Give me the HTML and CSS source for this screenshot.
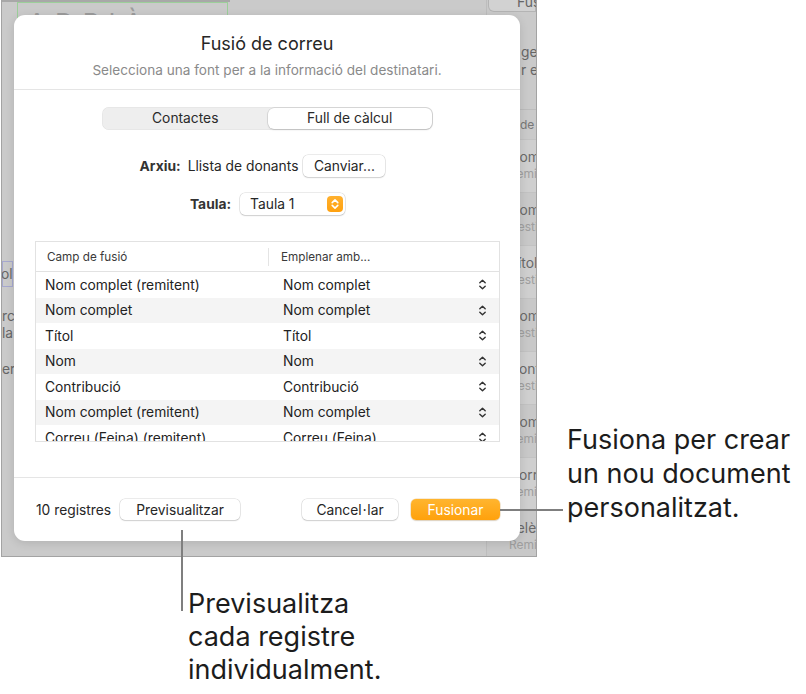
FILE: index.html
```html
<!DOCTYPE html>
<html lang="ca">
<head>
	<meta charset="UTF-8">
	<meta name="viewport" content="width=device-width, initial-scale=1.0">
	<title>Fusió de correu</title>
	<link rel="stylesheet" href="styles.css">
</head>
<body>
<div class="figure">
	<div class="shot">
		<div class="app">
			<div class="strip">
				<div class="cells"><span>ol</span><span></span></div>
				<p class="frag frag-rc">rc</p>
				<p class="frag">la</p>
				<p class="frag frag-er">er</p>
			</div>
			<div class="doc">
				<div class="doc-bar"></div>
				<div class="name-box">ADRIÀ BOVIRA</div>
			</div>
			<div class="sidebar">
				<div class="side-btn">Fusionar</div>
				<p class="side-text">gegant<br>r exemple</p>
				<div class="side-head">de fusió</div>
				<div class="side-item"><b>Nom complet</b><small>Remitent</small></div>
				<div class="side-item alt"><b>Nom complet</b><small>Destinatari</small></div>
				<div class="side-item"><b>Títol</b><small>Destinatari</small></div>
				<div class="side-item alt"><b>Nom</b><small>Destinatari</small></div>
				<div class="side-item"><b>Contribució</b><small>Destinatari</small></div>
				<div class="side-item alt"><b>Nom complet</b><small>Remitent</small></div>
				<div class="side-item"><b>Correu</b><small>Remitent</small></div>
				<div class="side-item alt"><b>Telèfon</b><small>Remitent</small><i class="dot"></i></div>
			</div>
		</div>

		<div class="dialog">
			<div class="dlg-head">
				<h1>Fusió de correu</h1>
				<p>Selecciona una font per a la informació del destinatari.</p>
			</div>
			<div class="dlg-body">
				<div class="segmented">
					<span>Contactes</span>
					<span class="on">Full de càlcul</span>
				</div>
				<div class="field field-file">
					<b>Arxiu:</b>
					<span>Llista de donants</span>
					<button class="btn btn-change">Canviar...</button>
				</div>
				<div class="field field-table">
					<b>Taula:</b>
					<div class="popup">
						<span>Taula 1</span>
						<i class="stepper">
							<svg width="16" height="16" viewBox="0 0 16 16"><path d="M5.2 6.6 8 3.9l2.8 2.7M5.2 9.4 8 12.1l2.8-2.7" fill="none" stroke="#fff" stroke-width="1.6" stroke-linecap="round" stroke-linejoin="round"/></svg>
						</i>
					</div>
				</div>
				<div class="fields">
					<div class="fields-head">
						<span>Camp de fusió</span>
						<span class="col2">Emplenar amb...</span>
					</div>
					<div class="fields-rows">
						<div class="row"><span>Nom complet (remitent)</span><span>Nom complet</span><svg class="chev" viewBox="0 0 9 13"><path d="M1.8 4.8 4.5 2.2l2.7 2.6M1.8 8.2l2.7 2.6 2.7-2.6" fill="none" stroke="#333" stroke-width="1.4" stroke-linecap="round" stroke-linejoin="round"/></svg></div>
						<div class="row alt"><span>Nom complet</span><span>Nom complet</span><svg class="chev" viewBox="0 0 9 13"><path d="M1.8 4.8 4.5 2.2l2.7 2.6M1.8 8.2l2.7 2.6 2.7-2.6" fill="none" stroke="#333" stroke-width="1.4" stroke-linecap="round" stroke-linejoin="round"/></svg></div>
						<div class="row"><span>Títol</span><span>Títol</span><svg class="chev" viewBox="0 0 9 13"><path d="M1.8 4.8 4.5 2.2l2.7 2.6M1.8 8.2l2.7 2.6 2.7-2.6" fill="none" stroke="#333" stroke-width="1.4" stroke-linecap="round" stroke-linejoin="round"/></svg></div>
						<div class="row alt"><span>Nom</span><span>Nom</span><svg class="chev" viewBox="0 0 9 13"><path d="M1.8 4.8 4.5 2.2l2.7 2.6M1.8 8.2l2.7 2.6 2.7-2.6" fill="none" stroke="#333" stroke-width="1.4" stroke-linecap="round" stroke-linejoin="round"/></svg></div>
						<div class="row"><span>Contribució</span><span>Contribució</span><svg class="chev" viewBox="0 0 9 13"><path d="M1.8 4.8 4.5 2.2l2.7 2.6M1.8 8.2l2.7 2.6 2.7-2.6" fill="none" stroke="#333" stroke-width="1.4" stroke-linecap="round" stroke-linejoin="round"/></svg></div>
						<div class="row alt"><span>Nom complet (remitent)</span><span>Nom complet</span><svg class="chev" viewBox="0 0 9 13"><path d="M1.8 4.8 4.5 2.2l2.7 2.6M1.8 8.2l2.7 2.6 2.7-2.6" fill="none" stroke="#333" stroke-width="1.4" stroke-linecap="round" stroke-linejoin="round"/></svg></div>
						<div class="row"><span>Correu (Feina) (remitent)</span><span>Correu (Feina)</span><svg class="chev" viewBox="0 0 9 13"><path d="M1.8 4.8 4.5 2.2l2.7 2.6M1.8 8.2l2.7 2.6 2.7-2.6" fill="none" stroke="#333" stroke-width="1.4" stroke-linecap="round" stroke-linejoin="round"/></svg></div>
					</div>
				</div>
			</div>
			<div class="dlg-foot">
				<span class="count">10 registres</span>
				<button class="btn btn-preview">Previsualitzar</button>
				<button class="btn btn-cancel">Cancel<span class="middot">·</span>lar</button>
				<button class="btn btn-merge">Fusionar</button>
			</div>
		</div>
	</div>

	<p class="note note-merge">Fusiona per crear<br>un nou document<br>personalitzat.</p>
	<p class="note note-preview">Previsualitza<br>cada registre<br>individualment.</p>
</div>
</body>
</html>
```

FILE: styles.css
```css
* {
	margin: 0;
	padding: 0;
	box-sizing: border-box;
}

body {
	background: #fff;
	font-family: Inter, "Noto Sans", sans-serif;
	font-feature-settings: "calt" 0;
	color: #262626;
}

.figure {
	display: grid;
	grid-template-columns: 537px 1fr;
	width: 806px;
	height: 694px;
}

/* screenshot of the app behind the sheet */
.shot {
	position: relative;
	width: 537px;
	height: 557px;
}

.app {
	display: flex;
	height: 100%;
	margin-left: 1px;
	border: 1px solid #a3a3a3;
	border-top: 0;
	background: #cacaca;
	overflow: hidden;
	font-size: 13.8px;
	color: #555;
}

.strip {
	width: 14px;
	padding-top: 259px;
	border-top: 2px solid #a8a8a8;
	overflow: hidden;
	white-space: nowrap;
}

.cells {
	display: flex;
	gap: 2px;
	height: 26px;
}

.cells span {
	width: 11px;
	border: 1px solid #a6a8cf;
	line-height: 24px;
	text-indent: -2px;
	color: #666;
}

.cells span + span {
	width: 10px;
}

.frag {
	line-height: 17px;
	color: #666;
}

.frag-rc {
	margin-top: 21px;
}

.frag-er {
	margin-top: 19px;
}

.doc {
	flex: 1;
	position: relative;
}

.doc-bar {
	width: 214px;
	height: 2px;
	background: #a8a8a8;
}

.name-box {
	width: 211px;
	height: 40px;
	margin-left: 1px;
	border: 1px solid #9ccf9a;
	padding: 4px 0 0 10px;
	font-size: 26px;
	letter-spacing: 9px;
	color: #9c9c9c;
}

.sidebar {
	width: 50px;
	border-left: 1px solid #bdbdbd;
	white-space: nowrap;
	overflow: hidden;
}

.side-btn {
	height: 12px;
	margin-left: 1px;
	border: 1px solid #b4b4b4;
	border-top: 0;
	border-radius: 0 0 0 6px;
	background: #d2d2d2;
	padding-left: 28px;
	font-size: 14px;
	line-height: 4px;
	color: #666;
}

.side-text {
	margin-top: 31px;
	padding-left: 34px;
	line-height: 18px;
	color: #666;
}

.side-head {
	margin-top: 30px;
	height: 30px;
	border-top: 1px solid #bcbcbc;
	padding: 7px 0 0 33px;
	font-size: 12px;
	color: #777;
}

.side-item {
	position: relative;
	height: 53px;
	padding: 9px 0 0 22px;
	background: #cfcfcf;
	border-top: 1px solid #c2c2c2;
}

.side-item.alt {
	background: #c8c8c8;
}

.side-item b {
	display: block;
	font-weight: 400;
	line-height: 17px;
	color: #6a6a6a;
}

.side-item small {
	display: block;
	font-size: 12px;
	line-height: 16px;
	color: #9e9e9e;
}

.side-item .dot {
	position: absolute;
	left: 4px;
	top: 20px;
	width: 7px;
	height: 7px;
	border-radius: 50%;
	background: #7fbf6a;
}

/* the sheet */
.dialog {
	position: absolute;
	left: 14px;
	top: 15px;
	width: 506px;
	height: 526px;
	display: flex;
	flex-direction: column;
	background: #fff;
	border-radius: 11px;
	box-shadow: 0 2px 10px rgba(0, 0, 0, .12);
}

.dlg-head {
	height: 75px;
	padding-top: 18px;
	border-bottom: 1px solid #e5e5e5;
	text-align: center;
}

.dlg-head h1 {
	font-size: 18px;
	font-weight: 400;
	line-height: 22px;
	color: #262626;
}

.dlg-head p {
	margin-top: 7px;
	font-size: 13.6px;
	line-height: 16px;
	color: #8a8a8a;
}

.dlg-body {
	flex: 1;
	display: flex;
	flex-direction: column;
	align-items: center;
	padding: 17px 20px 0 21px;
	font-size: 13.8px;
}

.segmented {
	display: flex;
	width: 331px;
	height: 23px;
	padding: 1px;
	border-radius: 7px;
	background: #eeeeee;
	box-shadow: inset 0 0 0 .5px rgba(0, 0, 0, .06);
}

.segmented span {
	flex: 1;
	border-radius: 6px;
	text-align: center;
	line-height: 21px;
	color: #2a2a2a;
}

.segmented .on {
	background: #fff;
	box-shadow: 0 0 0 .5px rgba(0, 0, 0, .14), 0 1px 2px rgba(0, 0, 0, .12);
}

.field {
	display: flex;
	align-items: center;
	height: 22px;
	color: #262626;
}

.field b {
	font-weight: 700;
	margin-right: 7px;
	color: #333;
}

.field-file {
	margin-top: 25px;
	margin-right: 10px;
}

.field-table {
	margin-top: 16px;
}

.field-table b {
	margin-right: 9px;
}

.btn {
	height: 21px;
	border: 0;
	border-radius: 5px;
	background: #fff;
	font-family: inherit;
	font-size: 13.8px;
	color: #262626;
	box-shadow: 0 0 0 .5px rgba(0, 0, 0, .16), 0 1px 1.5px rgba(0, 0, 0, .12);
}

.btn-change {
	width: 82px;
	height: 22px;
	margin-left: 5px;
}

.popup {
	display: flex;
	align-items: center;
	justify-content: space-between;
	width: 105px;
	height: 22px;
	padding: 0 2px 0 10px;
	border-radius: 5px;
	background: #fff;
	box-shadow: 0 0 0 .5px rgba(0, 0, 0, .16), 0 1px 1.5px rgba(0, 0, 0, .12);
}

.stepper {
	display: block;
	width: 16px;
	height: 16px;
	border-radius: 4px;
	background: linear-gradient(#ffb12f, #ffa10f);
}

.stepper svg {
	display: block;
}

.fields {
	align-self: stretch;
	height: 201px;
	margin-top: 26px;
	border: 1px solid #e2e2e2;
	overflow: hidden;
}

.fields-head {
	display: grid;
	grid-template-columns: 232px 1fr;
	align-items: center;
	height: 30px;
	border-bottom: 1px solid #e2e2e2;
	font-size: 11.7px;
	color: #3a3a3a;
}

.fields-head span {
	padding-left: 11px;
}

.fields-head .col2 {
	padding-left: 12px;
	border-left: 1px solid #e4e4e4;
	line-height: 18px;
}

.row {
	display: grid;
	grid-template-columns: 232px 1fr auto;
	align-items: center;
	height: 25.5px;
	padding-right: 12px;
	color: #222;
}

.row span:first-child {
	padding-left: 9px;
}

.row span + span {
	padding-left: 15px;
}

.row.alt {
	background: #f4f4f4;
}

.chev {
	width: 9px;
	height: 13px;
}

.dlg-foot {
	display: flex;
	align-items: center;
	height: 64px;
	padding: 0 20px 0 22px;
	border-top: 1px solid #e5e5e5;
	font-size: 13.8px;
}

.count {
	color: #262626;
}

.btn-preview {
	width: 120px;
	margin-left: 9px;
}

.btn-cancel {
	width: 96px;
	margin-left: auto;
}

.middot {
	font-family: "Noto Sans", sans-serif;
	padding: 0 1px;
}

.btn-merge {
	width: 89px;
	margin-left: 13px;
	color: #fff;
	background: linear-gradient(#ffb52f, #ffa10c);
	box-shadow: 0 0 0 .5px rgba(200, 120, 0, .3), 0 1px 1.5px rgba(0, 0, 0, .12);
}

/* callouts */
.note {
	position: relative;
	font-size: 27px;
	line-height: 34px;
	color: #1c1c1c;
}

.note-merge {
	grid-column: 2;
	grid-row: 1;
	align-self: start;
	margin: 423px 0 0 30px;
	white-space: nowrap;
}

.note-merge::before {
	content: "";
	position: absolute;
	left: -67px;
	top: 86px;
	width: 63px;
	height: 2px;
	background: #7f7f7f;
}

.note-preview {
	grid-column: 1;
	grid-row: 2;
	align-self: start;
	margin: 21px 0 0 188px;
	line-height: 33px;
}

.note-preview::before {
	content: "";
	position: absolute;
	left: -7px;
	top: -57px;
	width: 2px;
	height: 81px;
	background: #7f7f7f;
}
```
